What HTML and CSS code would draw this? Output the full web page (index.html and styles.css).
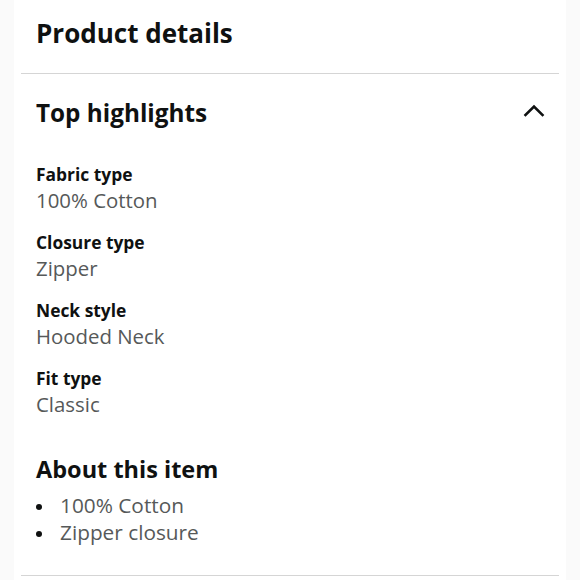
FILE: index.html
```html
<!DOCTYPE html>
<html lang="en">
<head>
<meta charset="utf-8">
<title>Product details</title>
<link rel="stylesheet" href="styles.css">
</head>
<body>
<main class="page">
  <header class="header">
    <h1 class="title">Product details</h1>
  </header>
  <section class="section">
    <div class="section-head">
      <h2 class="section-title">Top highlights</h2>
      <svg class="chevron" width="22" height="14" viewBox="0 0 22 14" aria-hidden="true">
        <polyline points="2.5,12 11,3.5 19.5,12" fill="none" stroke="#0f1111" stroke-width="2.6" stroke-linecap="square" stroke-linejoin="miter"/>
      </svg>
    </div>
    <dl class="specs">
      <div class="spec"><dt class="spec-label">Fabric type</dt><dd class="spec-value">100% Cotton</dd></div>
      <div class="spec"><dt class="spec-label">Closure type</dt><dd class="spec-value">Zipper</dd></div>
      <div class="spec"><dt class="spec-label">Neck style</dt><dd class="spec-value">Hooded Neck</dd></div>
      <div class="spec"><dt class="spec-label">Fit type</dt><dd class="spec-value">Classic</dd></div>
    </dl>
    <h3 class="about-title">About this item</h3>
    <ul class="bullets">
      <li class="bullet">100% Cotton</li>
      <li class="bullet">Zipper closure</li>
    </ul>
  </section>
</main>
</body>
</html>
```
FILE: styles.css
```css
* { box-sizing: border-box; }

html, body {
  margin: 0;
  padding: 0;
  background: #fafafa;
}

body {
  font-family: "Open Sans", "Noto Sans", sans-serif;
  color: #0f1111;
}

.page {
  margin: 0 14px;
  padding: 0 7px;
  background: #ffffff;
  min-height: 580px;
}

.header {
  padding: 17px 15px 23px;
  border-bottom: 1px solid #d5d5d5;
}

.title {
  margin: 0;
  font-size: 26px;
  line-height: 33px;
  font-weight: 700;
}

.section {
  padding: 22px 14px 29px 15px;
  border-bottom: 1px solid #d5d5d5;
}

.section-head {
  display: flex;
  align-items: center;
  justify-content: space-between;
}

.section-title {
  margin: 0;
  font-size: 24.3px;
  line-height: 33px;
  font-weight: 700;
}

.chevron {
  display: block;
  margin-top: -5px;
}

.specs {
  margin: 33px 0 0;
  display: flex;
  flex-direction: column;
  gap: 16px;
}

.spec { margin: 0; }

.spec-label {
  font-size: 17.4px;
  line-height: 24px;
  font-weight: 700;
}

.spec-value {
  margin: 0;
  font-size: 20.4px;
  line-height: 28px;
  color: #565959;
}

.about-title {
  margin: 36px 0 0;
  font-size: 23.5px;
  line-height: 30px;
  font-weight: 700;
}

.bullets {
  margin: 8px 0 0;
  padding: 0;
  list-style: none;
}

.bullet {
  display: flex;
  align-items: center;
  font-size: 20.8px;
  line-height: 27px;
  color: #565959;
}

.bullet::before {
  content: "";
  flex: none;
  width: 6px;
  height: 6px;
  border-radius: 50%;
  background: #0f1111;
  margin: 2px 18px 0 0;
}
```
